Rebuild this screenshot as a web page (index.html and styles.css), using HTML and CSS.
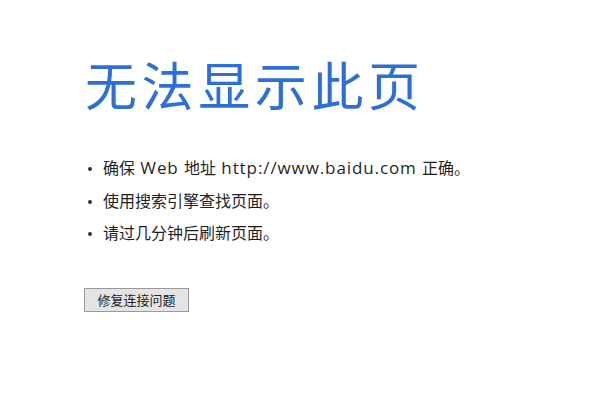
FILE: index.html
```html
<!DOCTYPE html>
<html lang="zh-CN">
<head>
<meta charset="utf-8">
<link rel="stylesheet" href="styles.css">
</head>
<body>
<main class="page">
  <h1 class="title">无法显示此页</h1>
  <ul class="tips">
    <li>确保<span class="en"> Web </span>地址<span class="en"> http://www.baidu.com </span>正确。</li>
    <li>使用搜索引擎查找页面。</li>
    <li>请过几分钟后刷新页面。</li>
  </ul>
  <button class="fix">修复连接问题</button>
</main>
</body>
</html>
```
FILE: styles.css
```css
html, body {
  margin: 0;
  padding: 0;
  background: #ffffff;
}
.page {
  padding: 54px 0 0 85px;
  font-family: "Open Sans", "Noto Sans CJK SC", sans-serif;
}
.title {
  margin: 0;
  font-family: "Noto Sans CJK SC", sans-serif;
  font-weight: 400;
  font-size: 52px;
  line-height: 60px;
  color: #2d6fd4;
  letter-spacing: 4.6px;
}
.tips {
  margin: 38px 0 0 0;
  padding: 0 0 0 18px;
  list-style: none;
  color: #1f1f1f;
  font-size: 16px;
}
.tips li {
  position: relative;
  line-height: 32.5px;
  height: 32.5px;
}
.tips li::before {
  content: "";
  position: absolute;
  left: -15px;
  top: 15px;
  width: 4px;
  height: 4px;
  border-radius: 50%;
  background: #333;
}
.en {
  font-size: 17px;
  letter-spacing: 0.9px;
}
.fix {
  display: block;
  margin-top: 38px;
  margin-left: -1px;
  width: 105px;
  height: 24px;
  padding: 0;
  border: 1px solid #9a9a9a;
  background: #e4e4e4;
  color: #222;
  font-family: "Noto Sans CJK SC", sans-serif;
  font-size: 13px;
  line-height: 22px;
}
```
